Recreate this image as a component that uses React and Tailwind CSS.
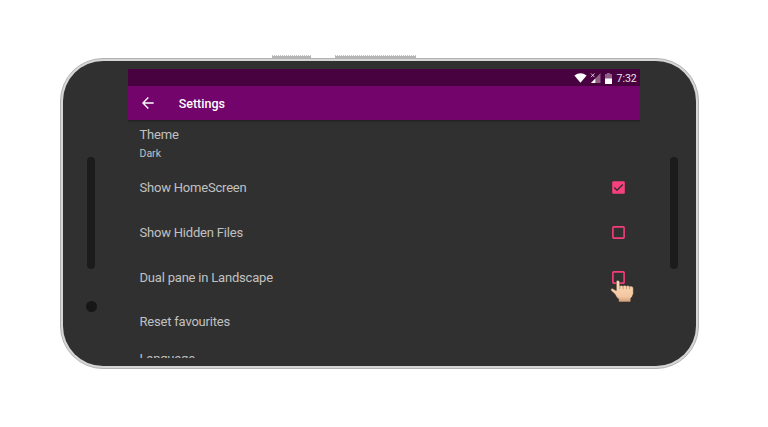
function Checkbox({ checked }) {
  return (
    <svg className="h-[13px] w-[13px]" viewBox="0 0 13 13" fill="none">
      {checked ? (
        <>
          <rect x="0.2" y="0.2" width="12.6" height="12.6" rx="1.3" fill="#f9407f" />
          <path d="M2.3 6.5 5 9.2 10.8 3.5" stroke="#303030" strokeWidth="1.5" />
        </>
      ) : (
        <rect x="0.9" y="0.9" width="11.2" height="11.2" rx="0.8" stroke="#f53d7e" strokeWidth="1.6" />
      )}
    </svg>
  );
}

function Hand() {
  return (
    <svg className="absolute left-[-2px] top-[9px] h-[23px] w-[25px]" viewBox="0 0 26 24" preserveAspectRatio="none">
      <defs>
        <linearGradient id="skin" x1="0" y1="0" x2="0" y2="1">
          <stop offset="0" stopColor="#fbdcbb" />
          <stop offset="0.75" stopColor="#f3c7a0" />
          <stop offset="1" stopColor="#c79c7b" />
        </linearGradient>
      </defs>
      <path
        d="M6.5 1.8Q6.9.3 8.2.3T10.2 2V6.1Q12 5.1 13.5 6.2 15.4 5 17 6.2 18.7 5.2 20.4 6.5 23 5.6 24.3 8V14.2Q23.8 17.2 21.6 19.2V23H9V20Q6.3 17.9 5 14.7L.9 10.9Q.2 9 2.3 8.7L6.5 11Z"
        fill="url(#skin)"
        stroke="#3b2e25"
        strokeWidth="0.6"
      />
      <path d="M10.3 6.4v3M13.7 6.6v3M17.1 6.6v3M20.4 6.8v3" stroke="#a57a5e" strokeWidth="0.7" />
    </svg>
  );
}

function Row({ label, height, children }) {
  return (
    <div className={`flex shrink-0 items-center justify-between pl-[11.5px] pr-[15.5px] ${height}`}>
      <span className="pt-[1px]">{label}</span>
      {children}
    </div>
  );
}

function StatusBar() {
  return (
    <div className="flex h-[17px] shrink-0 items-center bg-[#47023f] pl-[445.5px] pt-[1px] text-[11px] text-[#eee4ed]">
      <svg className="h-[10px] w-[13px]" viewBox="0 0 13 10">
        <path d="M.4 2.4Q6.5-1.7 12.6 2.4L6.5 9.8Z" fill="#fff" />
      </svg>
      <svg className="ml-[3px] h-[10px] w-[11px]" viewBox="0 0 11 10">
        <path d="M10.5 0V10H1Z" fill="#906087" />
        <path d="M5.3 5.4V10H1Z" fill="#fff" />
        <path d="m1 .5 3.5 3.6M4.5.5 1 4.1" stroke="#e7d7e4" strokeWidth="0.9" />
      </svg>
      <svg className="ml-[4.5px] h-[11px] w-[7px]" viewBox="0 0 7 11">
        <path d="M2 0h3v1h2v5H0V1h2z" fill="#906087" />
        <path d="M0 5.5h7V11H0z" fill="#fff" />
      </svg>
      <span className="ml-[4.5px] pt-[2px] text-[10.5px] leading-none">7:32</span>
    </div>
  );
}

export default function App() {
  return (
    <main className="flex h-[427px] w-[768px] flex-col overflow-hidden bg-white pl-[60px] pt-[55px] font-['Roboto','Noto_Sans',sans-serif]">
      <div className="flex h-[3px] shrink-0 pl-[212px]">
        <div className="h-[3px] w-[39px] border-t border-dotted border-[#c4c4c4] bg-[#b5b5b5] bg-clip-padding" />
        <div className="ml-6 h-[3px] w-[81px] border-t border-dotted border-[#c4c4c4] bg-[#b5b5b5] bg-clip-padding" />
      </div>
      <div className="h-[311px] w-[639px] shrink-0 rounded-[43px] border border-[#b2b2b2] bg-[#d5d7d6] p-[2px]">
        <div className="flex h-full rounded-[40px] bg-[#303030]">
          <aside className="flex w-[65px] shrink-0 flex-col pl-6 pt-[96px]">
            <div className="h-[112px] w-2 rounded-full bg-[#1b1b1b]" />
            <div className="-ml-[1px] mt-8 h-[11px] w-[11px] rounded-full bg-[#171717]" />
          </aside>
          <section className="mt-[8px] flex h-[289px] w-[512px] shrink-0 flex-col overflow-hidden">
            <StatusBar />
            <header className="flex h-[34px] shrink-0 items-center bg-[#72046b] pl-[14px] text-white shadow-[0_1px_2px_#1c1c1c]">
              <svg className="h-[12px] w-[12px]" viewBox="0 0 12 12" fill="none" stroke="currentColor" strokeWidth="1.4">
                <path d="M11.7 6H1M6.3.6.9 6l5.4 5.4" />
              </svg>
              <h1 className="ml-[24.7px] pt-[2.5px] text-[12.5px] font-medium">Settings</h1>
            </header>
            <div className="flex min-h-0 flex-1 flex-col overflow-hidden text-[13px] tracking-[-0.2px] text-[#c1c1c1]">
              <div className="flex h-[45.5px] shrink-0 flex-col pl-[11.5px] pt-[5.5px]">
                <span className="leading-[17px]">Theme</span>
                <span className="mt-[3px] text-[10.5px] leading-[15px] tracking-normal">Dark</span>
              </div>
              <Row label="Show HomeScreen" height="h-[44px]"><Checkbox checked /></Row>
              <Row label="Show Hidden Files" height="h-[45px]"><Checkbox /></Row>
              <Row label="Dual pane in Landscape" height="h-[45px]">
                <div className="relative"><Checkbox /><Hand /></div>
              </Row>
              <Row label="Reset favourites" height="h-[43px]" />
              <Row label="Language" height="h-[31px]" />
            </div>
          </section>
          <aside className="flex flex-1 pl-[30px] pt-[96px]">
            <div className="h-[112px] w-2 rounded-full bg-[#1b1b1b]" />
          </aside>
        </div>
      </div>
    </main>
  );
}
